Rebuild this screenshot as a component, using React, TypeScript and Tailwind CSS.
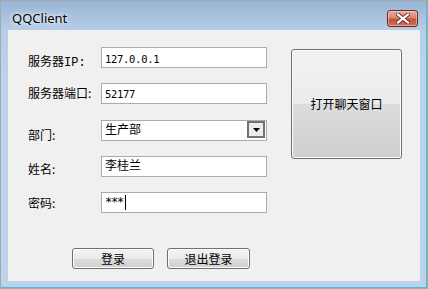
import React from "react";

const cjk = { fontFamily: '"Noto Sans CJK SC", "Noto Sans", sans-serif' };
const mono = { fontFamily: '"Liberation Mono", "DejaVu Sans Mono", monospace' };
const dmono = { fontFamily: '"DejaVu Sans Mono", "Liberation Mono", monospace' };

function Asc({ children }: { children: React.ReactNode }) {
  return (
    <span className="text-[10.5px] leading-[14px] tracking-[-0.3px]" style={dmono}>
      {children}
    </span>
  );
}

function Field({ children }: { children?: React.ReactNode }) {
  return (
    <div className="relative flex h-[21px] w-[166px] items-start border border-[#ababab] bg-white pl-[3px] pt-[1px] text-[12px] leading-[14px] text-black" style={cjk}>
      {children}
    </div>
  );
}

function Btn({ children, className }: { children: React.ReactNode; className: string }) {
  return (
    <div
      className={`flex items-center justify-center rounded-[3px] border border-[#707070] text-[12px] text-black ${className}`}
      style={{
        ...cjk,
        background: "linear-gradient(to bottom, #f2f2f2 0%, #ebebeb 50%, #dddddd 50%, #cfcfcf 100%)",
        boxShadow: "inset 0 0 0 1px #fcfcfc",
      }}
    >
      {children}
    </div>
  );
}

function Label({ children, pt }: { children: React.ReactNode; pt: string }) {
  return (
    <div className={`w-[73px] shrink-0 text-[12px] leading-[12px] text-black ${pt}`} style={cjk}>
      {children}
    </div>
  );
}

export default function App() {
  return (
    <div className="h-[289px] w-[428px] border border-[#a3a9b0] bg-[#bcd3ea]">
      <div
        className="flex h-full w-full flex-col border-b border-r border-b-[#47bfd6] border-r-[#47bfd6]"
        style={{ background: "linear-gradient(to bottom, #99b5d4 0px, #b6cde7 29px, #bad2eb 60px, #bbd3eb 100%)" }}
      >
        {/* title bar */}
        <div className="flex h-[29px] items-start justify-between">
          <div
            className="pl-[11px] pt-[9px] text-[13px] leading-[16px] text-black"
            style={{ fontFamily: '"Noto Sans", "Open Sans", sans-serif', textShadow: "0 0 6px #ffffff, 0 0 3px #ffffff" }}
          >
            QQClient
          </div>
          <div
            className="mr-[8px] mt-[9px] flex h-[17px] w-[31px] items-center justify-center rounded-[3px] border border-[#6a2a24]"
            style={{
              background: "linear-gradient(to bottom, #eaa99b 0%, #dc8574 45%, #c95039 55%, #d2705a 100%)",
              boxShadow: "inset 0 0 0 1px rgba(255,220,210,0.5)",
            }}
          >
            <svg width="14" height="11" viewBox="0 0 14 11">
              <path d="M2 1.5 L12 9.5 M12 1.5 L2 9.5" stroke="#5a3530" strokeWidth="4" strokeLinecap="square" />
              <path d="M2 1.5 L12 9.5 M12 1.5 L2 9.5" stroke="#ffffff" strokeWidth="2.2" strokeLinecap="square" />
            </svg>
          </div>
        </div>
        {/* client */}
        <div className="ml-[7px] flex h-[251px] w-[412px] bg-[#f0f0f0]">
          <div className="flex flex-col pl-[20px] pt-[17px]">
            <div className="flex">
              <Label pt="pt-[8px]">
                服务器<span className="text-[12px]" style={mono}>IP:</span>
              </Label>
              <Field>
                <span className="pt-[2px]"><Asc>127.0.0.1</Asc></span>
              </Field>
            </div>
            <div className="mt-[14px] flex">
              <Label pt="pt-[4px]">服务器端口:</Label>
              <Field>
                <span className="pt-[1px]"><Asc>52177</Asc></span>
              </Field>
            </div>
            <div className="mt-[16px] flex">
              <Label pt="pt-[9px]">部门:</Label>
              <div className="relative flex h-[21px] w-[166px] items-start border border-[#ababab] bg-white pl-[3px] pt-[1px] text-[12px] leading-[14px] text-black" style={cjk}>
                生产部
                <div className="absolute right-[1px] top-[0px] flex h-[17px] w-[18px] items-center justify-center border-2 border-[#727272] bg-[#ececec]">
                  <svg width="7" height="4" viewBox="0 0 7 4">
                    <path d="M0 0 H7 L3.5 4 Z" fill="#000" />
                  </svg>
                </div>
              </div>
            </div>
            <div className="mt-[15px] flex">
              <Label pt="pt-[7px]">姓名:</Label>
              <Field>李桂兰</Field>
            </div>
            <div className="mt-[15px] flex">
              <Label pt="pt-[5px]">密码:</Label>
              <Field>
                <span
                  className="pt-[1px] text-[12px] leading-[14px] tracking-[-1.2px]"
                  style={dmono}
                >
                  ***
                </span>
                <span className="ml-[2px] mt-[1px] h-[15px] w-px bg-black" />
              </Field>
            </div>
            <div className="mt-[35px] flex pl-[44px]">
              <Btn className="h-[21px] w-[82px]">登录</Btn>
              <Btn className="ml-[13px] h-[21px] w-[83px]">退出登录</Btn>
            </div>
          </div>
          <div className="ml-[24px] pt-[19px]">
            <Btn className="h-[110px] w-[111px]">打开聊天窗口</Btn>
          </div>
        </div>
      </div>
    </div>
  );
}
